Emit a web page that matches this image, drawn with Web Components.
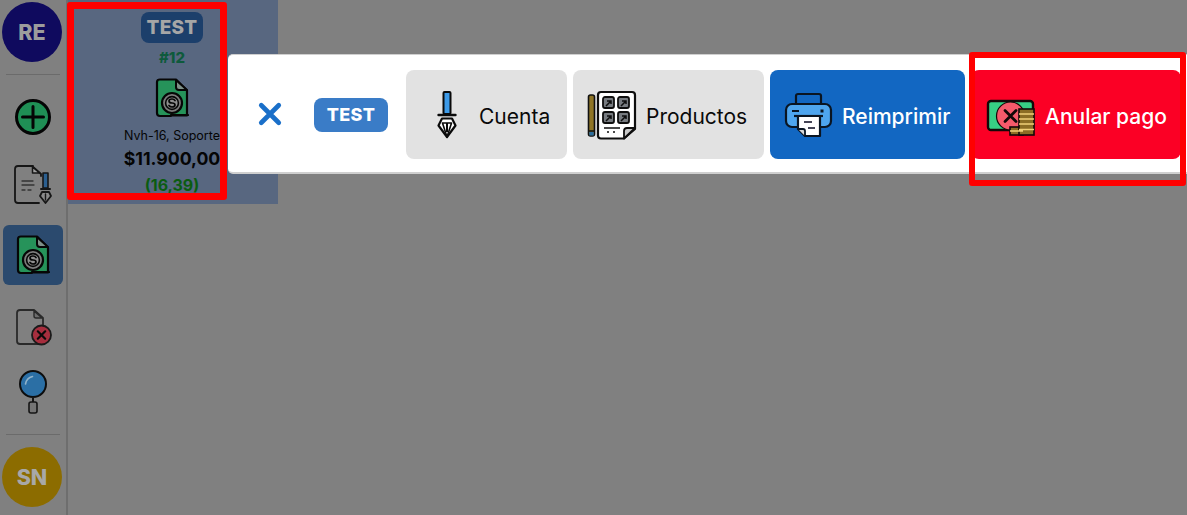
<!DOCTYPE html>
<html lang="es">
<head>
<meta charset="utf-8">
<title>Pagos</title>
<style>
  html, body { margin: 0; height: 100%; background: #808080; overflow: hidden; }
  body { font-family: Inter, "Liberation Sans", sans-serif; }
</style>
</head>
<body>
<app-shell>
  <app-sidebar slot="side">
    <avatar-circle color="#0f0a5e" text-color="#9c9c9c">RE</avatar-circle>
    <side-rule></side-rule>
    <side-item style="margin-top:12px"><app-icon name="plus" w="38" h="38"></app-icon></side-item>
    <side-item style="margin-top:8px"><app-icon name="docpen" w="40" h="40"></app-icon></side-item>
    <side-item active style="margin-top:10px"><app-icon name="filemoney" w="34" h="40"></app-icon></side-item>
    <side-item style="margin-top:12px"><app-icon name="docx" w="38" h="38"></app-icon></side-item>
    <side-item style="margin-top:5px"><app-icon name="lens" w="30" h="46"></app-icon></side-item>
    <side-rule style="margin-top:12px"></side-rule>
    <avatar-circle color="#8c6c00" text-color="#a8a8a8" style="margin-top:12px">SN</avatar-circle>
  </app-sidebar>
  <payment-card slot="main"></payment-card>
</app-shell>

<action-toast>
  <close-x></close-x>
  <tag-badge></tag-badge>
  <action-button width="161" gap="22"><app-icon slot="icon" name="pen" w="20" h="48"></app-icon>Cuenta</action-button>
  <action-button width="191" gap="9" pad="14"><app-icon slot="icon" name="products" w="50" h="50"></app-icon>Productos</action-button>
  <action-button width="195" gap="9" pad="14" kind="blue"><app-icon slot="icon" name="printer" w="49" h="46"></app-icon>Reimprimir</action-button>
  <action-button width="210" gap="9" pad="15" kind="red"><app-icon slot="icon" name="cancelpay" w="50" h="38" style="margin-top:6px"></app-icon>Anular pago</action-button>
</action-toast>

<mark-frame style="left:67px;top:2px;width:160px;height:198px" thick="7"></mark-frame>
<mark-frame style="left:969px;top:52px;width:217px;height:134px" thick="6"></mark-frame>

<script>
  const ICONS = {
    plus: `<svg viewBox="0 0 38 38"><circle cx="19" cy="19" r="16.5" fill="#1f8f55" stroke="#050505" stroke-width="3"/><path d="M19 8.5v21M8.5 19h21" stroke="#050505" stroke-width="3" stroke-linecap="round"/></svg>`,
    docpen: `<svg viewBox="0 0 40 40" fill="none" stroke="#161616" stroke-linecap="round" stroke-linejoin="round"><path d="M26 38H5q-3 0-3-3V4q0-3 3-3h15" stroke-width="1.800"/><path d="M19 1l9 8v2" stroke-width="1.800"/><path d="M19.500 2v6h7z" fill="#a0a0a0" stroke-width="1.500"/><path d="M9 16h11M9 20h12M9 25h3M15 25h3" stroke="#333" stroke-width="1.300"/><rect x="30" y="8" width="5" height="15" fill="#2b5f90" stroke-width="1.600"/><path d="M28 24h9" stroke-width="2"/><path d="M29 27h7l2 4-5.500 7L27 31z" fill="#8a8a8a" stroke-width="1.800"/><path d="M32.500 29v6" stroke-width="1.400"/></svg>`,
    filemoney: `<svg viewBox="0 0 34 40"><path d="M5 1.500h16l11 11V37.500H16V38H5q-3 0-3-3V4q0-2.500 3-2.500z" fill="#26935a" stroke="#060606" stroke-width="2.200" stroke-linejoin="round"/><path d="M21 2v7q0 3 3 3h8z" fill="#7e9088" stroke="#060606" stroke-width="2" stroke-linejoin="round"/><circle cx="17" cy="25" r="10" fill="#7d7d7d" stroke="#060606" stroke-width="2.200"/><circle cx="17" cy="25" r="6.400" fill="#8f8f8f" stroke="#060606" stroke-width="1.600"/><path d="M20 22.500q-1-1.500-3-1.500c-4 0-4 4 0 4s4 4 0 4q-2 0-3-1.500" fill="none" stroke="#060606" stroke-width="1.700" stroke-linecap="round"/><path d="M16 37h17" stroke="#060606" stroke-width="2.200" stroke-linecap="round"/></svg>`,
    docx: `<svg viewBox="0 0 38 38" fill="none" stroke="#2a2a2a" stroke-linecap="round" stroke-linejoin="round"><path d="M24 36H6q-3 0-3-3V5q0-3 3-3h14l9 8v7" stroke-width="1.800"/><path d="M20 3v5q0 2 2 2h6z" fill="#6d6d6d" stroke-width="1.400"/><circle cx="27.500" cy="27" r="9.500" fill="#a62e3e" stroke="#1a1a1a" stroke-width="1.800"/><path d="M23.800 23.300l7.400 7.400M31.200 23.300l-7.400 7.400" stroke="#0a0a0a" stroke-width="2.200"/></svg>`,
    lens: `<svg viewBox="0 0 30 46"><circle cx="15" cy="15" r="13" fill="#2b6fa5" stroke="#0d0d0d" stroke-width="2"/><path d="M7.500 15q1-6 7-7.500" fill="none" stroke="#8fb2ca" stroke-width="1.600" stroke-linecap="round"/><path d="M15 28v5" stroke="#161616" stroke-width="2"/><rect x="11" y="33" width="8" height="11" rx="2" fill="#757575" stroke="#161616" stroke-width="1.600"/></svg>`,
    pen: `<svg viewBox="0 0 20 48"><rect x="6.500" y="1" width="7" height="22" rx="1" fill="#3d9be9" stroke="#0a0a0a" stroke-width="2"/><path d="M1.500 24h17" stroke="#0a0a0a" stroke-width="2.400" stroke-linecap="round"/><path d="M5 27.500h10l3.500 7L10 46 1.500 34.500z" fill="#fff" stroke="#0a0a0a" stroke-width="2.200" stroke-linejoin="round"/><path d="M5.500 32h9L10 46z" fill="#fff" stroke="#0a0a0a" stroke-width="1.600" stroke-linejoin="round"/><path d="M10 32v9" stroke="#0a0a0a" stroke-width="2" fill="none"/></svg>`,
    products: `<svg viewBox="0 0 50 50"><rect x="1.500" y="5" width="6" height="41" rx="2" fill="#8f7526" stroke="#111" stroke-width="1.600"/><path d="M1.500 41h6" stroke="#111" stroke-width="1.500"/><rect x="2.300" y="42" width="4.400" height="3.500" fill="#2b6d9e"/><path d="M14 2h31q3 0 3 3v34L37 48.500H14q-3 0-3-3V5q0-3 3-3z" fill="#fff" stroke="#0e0e0e" stroke-width="2.200" stroke-linejoin="round"/><path d="M48 38H40q-3 0-3 3v7.500z" fill="#c9c9c9" stroke="#0e0e0e" stroke-width="1.800" stroke-linejoin="round"/>${[[16,7],[31,7],[16,22],[31,22]].map(([x,y])=>`<rect x="${x}" y="${y}" width="11" height="11" rx="2" fill="#777b80" stroke="#0e0e0e" stroke-width="1.800"/><path d="M${x+3} ${y+9}l5-5M${x+4} ${y+4}h4v3" fill="none" stroke="#0e0e0e" stroke-width="1.500"/>`).join("")}<path d="M17 38h16M20 42h2M26 42h2" stroke="#0e0e0e" stroke-width="1.500"/></svg>`,
    printer: `<svg viewBox="0 0 49 46"><rect x="12" y="2" width="25" height="14" rx="2" fill="#1267c2" stroke="#0a1522" stroke-width="2.200"/><rect x="2" y="12" width="45" height="23" rx="6" fill="#4ea5ee" stroke="#0a1522" stroke-width="2.200"/><path d="M8 19h7" stroke="#0a1522" stroke-width="2"/><rect x="36.500" y="17.500" width="3" height="3" fill="#0a1522"/><path d="M10 24h29" stroke="#0a1522" stroke-width="2.200"/><path d="M14 24h22v20H21l-7-7z" fill="#fff" stroke="#0a1522" stroke-width="2.200" stroke-linejoin="round"/><path d="M14 37h5q2 0 2 2v5" fill="#d8d8d8" stroke="#0a1522" stroke-width="1.800"/><path d="M20 30h8M24 36h7" stroke="#445" stroke-width="1.800"/></svg>`,
    cancelpay: `<svg viewBox="0 0 50 38"><rect x="2" y="2" width="45" height="29" rx="3" fill="#37cf85" stroke="#120808" stroke-width="2.400"/><circle cx="24.500" cy="17" r="14" fill="#f55a6b" stroke="#120808" stroke-width="1.200"/><path d="M19 11.500l11 11M30 11.500l-11 11" stroke="#120808" stroke-width="2.800" stroke-linecap="round"/><g stroke="#120808" stroke-width="1.600" fill="#8c6d24"><rect x="24" y="28" width="13" height="8"/><rect x="33" y="10" width="15" height="26"/></g><path d="M33 15h15M33 20h15M33 25h15M33 30.500h15M24 32h13" stroke="#f0d078" stroke-width="1.400"/></svg>`,
    cross: `<svg viewBox="0 0 24 24"><path d="M4.500 4.500l15 15M19.500 4.500l-15 15" stroke="#1a6fc9" stroke-width="4" stroke-linecap="round"/></svg>`
  };

  // helper para no repetir attachShadow en cada clase
  class Base extends HTMLElement {
    constructor() {
      super();
      this.attachShadow({ mode: "open" });
    }
    connectedCallback() { this.render(); }
  }

  class AppIcon extends Base {
    render() {
      const w = this.getAttribute("w") || 24;
      const h = this.getAttribute("h") || 24;
      this.shadowRoot.innerHTML = `
        <style>
          :host { display: block; flex: none; width: ${w}px; height: ${h}px; }
          svg { display: block; width: 100%; height: 100%; }
        </style>
        ${ICONS[this.getAttribute("name")] || ""}`;
    }
  }

  class AppShell extends Base {
    render() {
      this.shadowRoot.innerHTML = `
        <style>
          :host { display: flex; height: 515px; background: #808080; }
        </style>
        <slot name="side"></slot>
        <slot name="main"></slot>`;
    }
  }

  class AppSidebar extends Base {
    render() {
      this.shadowRoot.innerHTML = `
        <style>
          :host {
            display: flex; flex-direction: column; align-items: center;
            box-sizing: border-box; flex: none; width: 68px; height: 515px;
            padding: 2px 2px 0 0; border-right: 2px solid #6e6e6e;
          }
        </style>
        <slot></slot>`;
    }
  }

  class AvatarCircle extends Base {
    render() {
      this.shadowRoot.innerHTML = `
        <style>
          :host {
            display: flex; align-items: center; justify-content: center; flex: none;
            width: 60px; height: 60px; border-radius: 50%;
            background: ${this.getAttribute("color")};
            color: ${this.getAttribute("text-color")};
            font: 800 21.500px Inter, "Liberation Sans", sans-serif;
          }
        </style>
        <slot></slot>`;
    }
  }

  class SideRule extends Base {
    render() {
      this.shadowRoot.innerHTML = `
        <style>
          :host { display: block; flex: none; width: 54px; height: 1px; margin: 12px 0 0 2px; background: #6b6b6b; }
        </style>`;
    }
  }

  class SideItem extends Base {
    render() {
      const active = this.hasAttribute("active");
      this.shadowRoot.innerHTML = `
        <style>
          :host {
            display: flex; align-items: center; justify-content: center; flex: none;
            width: 60px; height: 60px; margin-left: 2px; border-radius: 6px;
            ${active ? "background: #2b4a6e;" : ""}
          }
        </style>
        <slot></slot>`;
    }
  }

  class TagBadge extends Base {
    render() {
      const dim = this.hasAttribute("dim");
      this.shadowRoot.innerHTML = `
        <style>
          :host {
            display: flex; align-items: center; justify-content: center; flex: none;
            box-sizing: border-box; border-radius: 8px; align-self: center;
            width: ${dim ? 62 : 74}px; height: ${dim ? 31 : 34}px;
            ${dim ? "" : "margin-right: 12px;"}
            background: ${dim ? "#1c3f6b" : "#3a7cc7"};
            color: ${dim ? "#a6a6a6" : "#fff"};
            font: 800 ${dim ? 19 : 18}px Inter, "Liberation Sans", sans-serif;
            letter-spacing: .3px;
          }
        </style>
        TEST`;
    }
  }

  class PaymentCard extends Base {
    render() {
      this.shadowRoot.innerHTML = `
        <style>
          :host {
            display: flex; flex-direction: column; align-items: center; flex: none;
            box-sizing: border-box; width: 210px; height: 204px; padding: 12px 2px 0 0;
            background: #586780; color: #050505;
          }
          .num { margin-top: 6px; font-size: 15px; line-height: 18px; font-weight: 800; color: #0e5a3c; }
          app-icon { margin-top: 11px; }
          .name { margin-top: 10px; font-size: 12.500px; line-height: 16px; white-space: nowrap; }
          .total { margin-top: 4px; font-size: 17.700px; line-height: 22px; font-weight: 700; white-space: nowrap; }
          .pct { margin-top: 6px; font-size: 16px; line-height: 18px; font-weight: 700; color: #0b5c10; }
        </style>
        <tag-badge dim></tag-badge>
        <div class="num">#12</div>
        <app-icon name="filemoney" w="34" h="40"></app-icon>
        <div class="name">Nvh-16, Soporte</div>
        <div class="total">$11.900,00</div>
        <div class="pct">(16,39)</div>`;
    }
  }

  class ActionToast extends Base {
    render() {
      this.shadowRoot.innerHTML = `
        <style>
          :host {
            position: absolute; left: 228px; top: 54px; right: 0; height: 120px;
            box-sizing: border-box; display: flex; align-items: stretch; gap: 6px;
            padding: 15px 6px 13px 0; background: #fff;
            border-top: 1.500px solid #cfcfcf; border-bottom: 2px solid #cfcfcf;
            border-radius: 5px 0 0 5px;
          }
        </style>
        <slot></slot>`;
    }
  }

  class CloseX extends Base {
    render() {
      this.shadowRoot.innerHTML = `
        <style>
          :host { display: flex; align-items: center; justify-content: flex-start; flex: none; width: 80px; height: 89px; padding-left: 28px; box-sizing: border-box; }
          app-icon { margin-top: -2px; }
        </style>
        <app-icon name="cross" w="28" h="28"></app-icon>`;
    }
  }

  class ActionButton extends Base {
    render() {
      const kind = this.getAttribute("kind");
      const bg = kind === "blue" ? "#1267c2" : kind === "red" ? "#fb0025" : "#e2e2e2";
      const fg = kind ? "#fff" : "#0a0a0a";
      const gap = this.getAttribute("gap") || 10;
      const pad = this.getAttribute("pad") || 31;
      this.shadowRoot.innerHTML = `
        <style>
          :host {
            display: flex; align-items: center; flex: none; box-sizing: border-box;
            width: ${this.getAttribute("width")}px; height: 89px;
            padding-left: ${pad}px; gap: ${gap}px; border-radius: 8px;
            background: ${bg}; color: ${fg};
            font: ${kind ? 500 : 400} 21px Inter, "Liberation Sans", sans-serif;
            white-space: nowrap;
          }
          .label { padding-top: 4px; }
        </style>
        <slot name="icon"></slot>
        <span class="label"><slot></slot></span>`;
    }
  }

  class MarkFrame extends Base {
    render() {
      const t = this.getAttribute("thick") || 6;
      this.shadowRoot.innerHTML = `
        <style>
          :host {
            position: absolute; display: block; box-sizing: border-box;
            border: ${t}px solid #ff0000; border-radius: 3px; pointer-events: none;
          }
        </style>`;
    }
  }

  customElements.define("app-icon", AppIcon);
  customElements.define("app-shell", AppShell);
  customElements.define("app-sidebar", AppSidebar);
  customElements.define("avatar-circle", AvatarCircle);
  customElements.define("side-rule", SideRule);
  customElements.define("side-item", SideItem);
  customElements.define("tag-badge", TagBadge);
  customElements.define("payment-card", PaymentCard);
  customElements.define("action-toast", ActionToast);
  customElements.define("close-x", CloseX);
  customElements.define("action-button", ActionButton);
  customElements.define("mark-frame", MarkFrame);
</script>
</body>
</html>
